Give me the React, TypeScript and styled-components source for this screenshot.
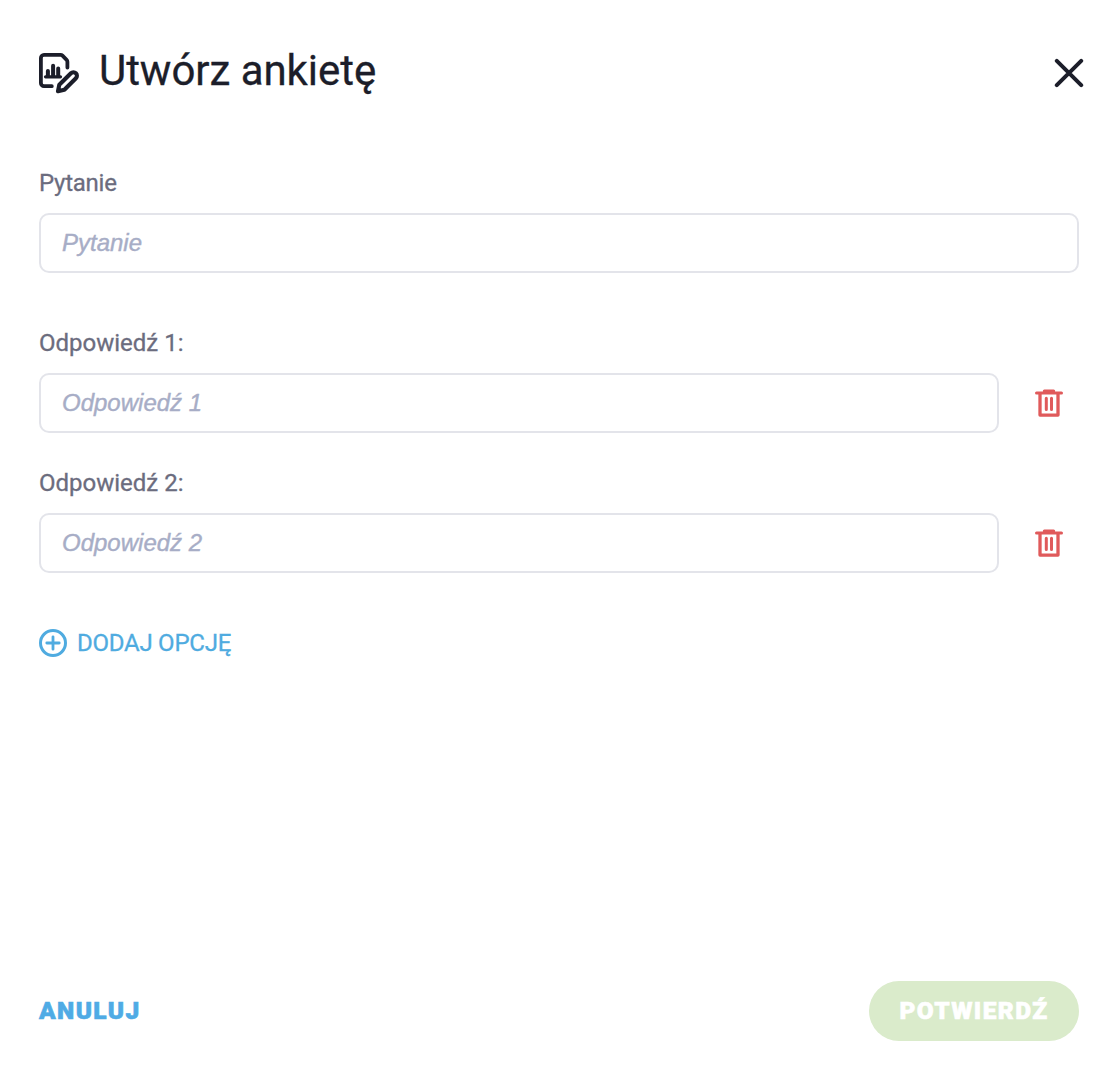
import React, { useState } from "react";
import styled, { createGlobalStyle } from "styled-components";

const GlobalStyle = createGlobalStyle`
  *, *::before, *::after { box-sizing: border-box; }
  body { margin: 0; background: #fff; font-family: Roboto, sans-serif; }
  button { font: inherit; border: 0; background: none; padding: 0; cursor: pointer; }
  svg { display: block; flex: none; }
`;

const Dialog = styled.form`
  display: flex;
  flex-direction: column;
  width: 100%;
  height: 1078px;
  padding: 40px 41px 37px 39px;
  background: #fff;
`;

const Header = styled.header`
  display: flex;
  align-items: center;
  height: 62px;
  color: #1c1e2a;
`;

const Title = styled.h1`
  flex: 1;
  margin: 0 0 0 20px;
  font-size: 42px;
  font-weight: 400;
  line-height: 62px;
  letter-spacing: -0.05px;
  -webkit-text-stroke: 0.3px currentColor;
`;

const CloseButton = styled.button`
  margin: 4px -5px 0 0;
  color: #1c1e2a;
`;

const Fields = styled.main`
  display: flex;
  flex-direction: column;
  flex: 1;
  padding-top: 65px;
`;

const Field = styled.div<{ $gap: number }>`
  margin-bottom: ${(p) => p.$gap}px;
`;

const Label = styled.label<{ $tracking?: number }>`
  display: block;
  height: 46px;
  line-height: 32px;
  font-size: 24px;
  letter-spacing: ${(p) => p.$tracking ?? 0}px;
  -webkit-text-stroke: 0.3px currentColor;
  color: #6b6c7e;
`;

const InputRow = styled.div`
  display: flex;
  align-items: center;
`;

const TextInput = styled.input`
  flex: 1;
  min-width: 0;
  height: 60px;
  padding: 0 21px;
  border: 2px solid #e3e4ea;
  border-radius: 10px;
  outline: none;
  background: #fff;
  font: 24px "Liberation Sans", Arial, sans-serif;
  color: #1c1e2a;
  &::placeholder {
    color: #a7adc6;
    font-style: italic;
    opacity: 1;
    -webkit-text-stroke: 0.4px #a7adc6;
  }
`;

const DeleteButton = styled.button`
  margin: 0 16px 0 36px;
  color: #e05a5b;
`;

const AddButton = styled.button`
  display: flex;
  align-items: center;
  align-self: flex-start;
  gap: 10px;
  height: 40px;
  font-size: 24px;
  letter-spacing: -0.25px;
  -webkit-text-stroke: 0.3px currentColor;
  color: #4fabe0;
`;

const Footer = styled.footer`
  display: flex;
  align-items: center;
  justify-content: space-between;
  height: 60px;
`;

const CancelButton = styled.button`
  height: 60px;
  padding-bottom: 2px;
  font-size: 24.5px;
  font-weight: 900;
  letter-spacing: 1.4px;
  -webkit-text-stroke: 0.6px currentColor;
  color: #4fabe5;
`;

const ConfirmButton = styled.button`
  width: 210px;
  height: 60px;
  padding-bottom: 2px;
  border-radius: 30px;
  background: #daebcb;
  font-size: 24.5px;
  font-weight: 900;
  letter-spacing: 1.4px;
  -webkit-text-stroke: 0.6px currentColor;
  color: #fff;
`;

const PollIcon = () => (
  <svg width="40" height="42" viewBox="0 0 40 42" fill="none" stroke="currentColor" strokeWidth="3.8" strokeLinecap="round" strokeLinejoin="round">
    <path d="M12.800 34.200H5A3.200 3.200 0 0 1 1.900 31V6A3.200 3.200 0 0 1 5 2.900H21.500C22.300 2.900 23 3.200 23.500 3.700L27.600 7.800C28.100 8.300 28.400 9 28.400 9.800V15.500" />
    <path d="M6.500 24.800H21.500" strokeWidth="3.200" />
    <path d="M8.900 24V19M14.100 24V13.700M19.200 24V16.500" strokeWidth="4" />
    <path d="M19 39.200L20.300 32.700L31.900 21.300A3.500 3.500 0 0 1 36.900 26.300L25.400 37.800Z" strokeWidth="4.100" />
  </svg>
);

const PollIconSlot = styled.span`
  padding-top: 3px;
`;

const CloseIcon = () => (
  <svg width="30" height="30" viewBox="0 0 30 30" fill="none" stroke="currentColor" strokeWidth="4" strokeLinecap="round">
    <path d="M2.800 2.800L27.200 27.200M27.200 2.800L2.800 27.200" />
  </svg>
);

const TrashIcon = () => (
  <svg width="28" height="28" viewBox="0 0 28 28" fill="none" stroke="currentColor" strokeWidth="3.300" strokeLinecap="round" strokeLinejoin="round">
    <path d="M1.500 4.100H26.500" strokeWidth="3" />
    <path d="M9.300 2H18.700" strokeWidth="3" />
    <path d="M5 5V26.100H23V5" />
    <path d="M11.300 9.300V20.500M16.500 9.300V20.500" strokeWidth="3" />
  </svg>
);

const PlusIcon = () => (
  <svg width="28" height="28" viewBox="0 0 28 28" fill="none" stroke="currentColor" strokeWidth="3" strokeLinecap="round">
    <circle cx="14" cy="14" r="12.500" />
    <path d="M14 7.800V20.200M7.800 14H20.200" strokeWidth="2.800" />
  </svg>
);

export default function App() {
  const [answers, setAnswers] = useState([1, 2]);
  return (
    <>
      <GlobalStyle />
      <Dialog onSubmit={(e) => e.preventDefault()}>
        <Header>
          <PollIconSlot>
            <PollIcon />
          </PollIconSlot>
          <Title>Utwórz ankietę</Title>
          <CloseButton type="button">
            <CloseIcon />
          </CloseButton>
        </Header>
        <Fields>
          <Field $gap={54}>
            <Label htmlFor="question" $tracking={-0.25}>Pytanie</Label>
            <InputRow>
              <TextInput id="question" placeholder="Pytanie" />
            </InputRow>
          </Field>
          {answers.map((id, i) => (
            <Field key={id} $gap={i === answers.length - 1 ? 50 : 34}>
              <Label htmlFor={`answer-${id}`}>Odpowiedź {i + 1}:</Label>
              <InputRow>
                <TextInput id={`answer-${id}`} placeholder={`Odpowiedź ${i + 1}`} />
                <DeleteButton type="button" onClick={() => setAnswers(answers.filter((a) => a !== id))}>
                  <TrashIcon />
                </DeleteButton>
              </InputRow>
            </Field>
          ))}
          <AddButton type="button" onClick={() => setAnswers([...answers, Math.max(0, ...answers) + 1])}>
            <PlusIcon />
            DODAJ OPCJĘ
          </AddButton>
        </Fields>
        <Footer>
          <CancelButton type="button">ANULUJ</CancelButton>
          <ConfirmButton type="submit">POTWIERDŹ</ConfirmButton>
        </Footer>
      </Dialog>
    </>
  );
}
